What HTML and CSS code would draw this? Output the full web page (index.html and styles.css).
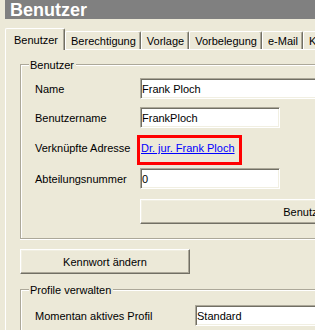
FILE: index.html
```html
<!DOCTYPE html>
<html lang="de">
<head>
    <meta charset="UTF-8">
    <title>Benutzer</title>
    <link rel="stylesheet" href="styles.css">
</head>
<body>
    <div class="window">
        <div class="title">Benutzer</div>

        <div class="tabs">
            <div class="tab active">Benutzer</div>
            <div class="tab">Berechtigung</div>
            <div class="tab">Vorlage</div>
            <div class="tab">Vorbelegung</div>
            <div class="tab">e-Mail</div>
            <div class="tab">Kalender</div>
        </div>

        <div class="panel">
            <div class="group group-user">
                <div class="group-head"><span>Benutzer</span></div>
                <div class="group-body">
                    <div class="row">
                        <label>Name</label>
                        <input class="field field-wide" type="text" value="Frank Ploch">
                    </div>
                    <div class="row">
                        <label>Benutzername</label>
                        <input class="field" type="text" value="FrankPloch">
                    </div>
                    <div class="row row-link">
                        <label>Verknüpfte Adresse</label>
                        <div class="highlight"><a href="#">Dr. jur. Frank Ploch</a></div>
                    </div>
                    <div class="row row-after-link">
                        <label>Abteilungsnummer</label>
                        <input class="field" type="text" value="0">
                    </div>
                    <div class="actions">
                        <button class="btn btn-wide">Benutzerdaten</button>
                    </div>
                </div>
            </div>

            <button class="btn btn-password">Kennwort ändern</button>

            <div class="group group-profile">
                <div class="group-head"><span>Profile verwalten</span></div>
                <div class="group-body">
                    <div class="row">
                        <label>Momentan aktives Profil</label>
                        <input class="field field-wide" type="text" value="Standard">
                    </div>
                </div>
            </div>
        </div>
    </div>
</body>
</html>
```

FILE: styles.css
```css
* {
    margin: 0;
    padding: 0;
    box-sizing: border-box;
}

html, body {
    overflow: hidden;
}

body {
    background: #ece9d8;
    font-family: "Liberation Sans", Arial, sans-serif;
    font-size: 11px;
    color: #000;
}

.window {
    width: 440px;
}

.title {
    margin-left: 5px;
    height: 19px;
    padding: 2px 0 0 5px;
    background: #808080;
    color: #fff;
    font-size: 18px;
    font-weight: bold;
    line-height: 17px;
}

/* tab strip */

.tabs {
    display: flex;
    align-items: flex-end;
    margin: 9px 0 0 5px;
}

.tab {
    flex-shrink: 0;
    height: 18px;
    padding: 3px 4px 1px 5px;
    line-height: 13px;
    white-space: nowrap;
    border-left: 1px solid #fff;
    border-top: 1px solid #fff;
    border-right: 1px solid #716f64;
    box-shadow: inset -1px 0 #aca899;
    border-top-left-radius: 2px;
    border-top-right-radius: 2px;
}

.tab.active {
    position: relative;
    z-index: 1;
    height: 22px;
    margin-bottom: -1px;
    padding: 5px 6px 3px 8px;
    background: #ece9d8;
}

.panel {
    margin-left: 5px;
    padding: 8px 0 0 14px;
    border-left: 1px solid #fff;
    border-top: 1px solid #fff;
    height: 300px;
}

/* group boxes */

.group-head {
    display: flex;
    height: 14px;
}

.group-head span {
    padding: 0 2px 0 1px;
    line-height: 14px;
}

.group-head::before,
.group-head::after {
    content: '';
    align-self: flex-end;
    height: 7px;
    border-top: 1px solid #aca899;
    box-shadow: inset 0 1px #fff;
}

.group-head::before {
    width: 8px;
    border-left: 1px solid #aca899;
    box-shadow: inset 1px 1px #fff;
}

.group-head::after {
    flex: 1;
}

.group-body {
    padding: 6px 0 14px 14px;
    border-left: 1px solid #aca899;
    border-bottom: 1px solid #aca899;
    box-shadow: inset 1px 0 #fff, 0 1px #fff;
}

.group-profile {
    margin-top: 9px;
}

.group-profile .group-body {
    padding-top: 8px;
}

/* form rows */

.row {
    display: flex;
    align-items: center;
    height: 21px;
}

.row + .row {
    margin-top: 8px;
}

.row label {
    flex-shrink: 0;
    width: 105px;
}

.group-profile .row label {
    width: 160px;
}

.row-link {
    align-items: flex-start;
    height: 24px;
}

.row.row-link {
    margin-top: 10px;
}

.row-link label {
    padding-top: 4px;
    line-height: 13px;
}

.row.row-after-link {
    margin-top: 6px;
}

.field {
    width: 140px;
    height: 21px;
    padding: 0 1px;
    font: inherit;
    color: #000;
    background: #fff;
    border: 1px solid;
    border-color: #aca899 #fff #fff #aca899;
    box-shadow: inset 1px 1px #716f64, inset -1px -1px #f1efe2;
    outline: none;
}

.field-wide {
    width: 300px;
}

.highlight {
    width: 99px;
    height: 24px;
    padding: 4px 0 0 1px;
    line-height: 13px;
    outline: 3px solid #f00;
    white-space: nowrap;
}

.highlight a {
    color: #00f;
}

/* buttons */

.btn {
    display: block;
    height: 25px;
    font: inherit;
    color: #000;
    background: #ece9d8;
    border: 1px solid;
    border-color: #fff #716f64 #716f64 #fff;
    box-shadow: inset -1px -1px #aca899, inset 1px 1px #f1efe2;
}

.actions {
    margin-top: 10px;
    padding-left: 105px;
}

.btn-wide {
    width: 358px;
}

.btn-password {
    width: 170px;
    margin-top: 10px;
}
```
